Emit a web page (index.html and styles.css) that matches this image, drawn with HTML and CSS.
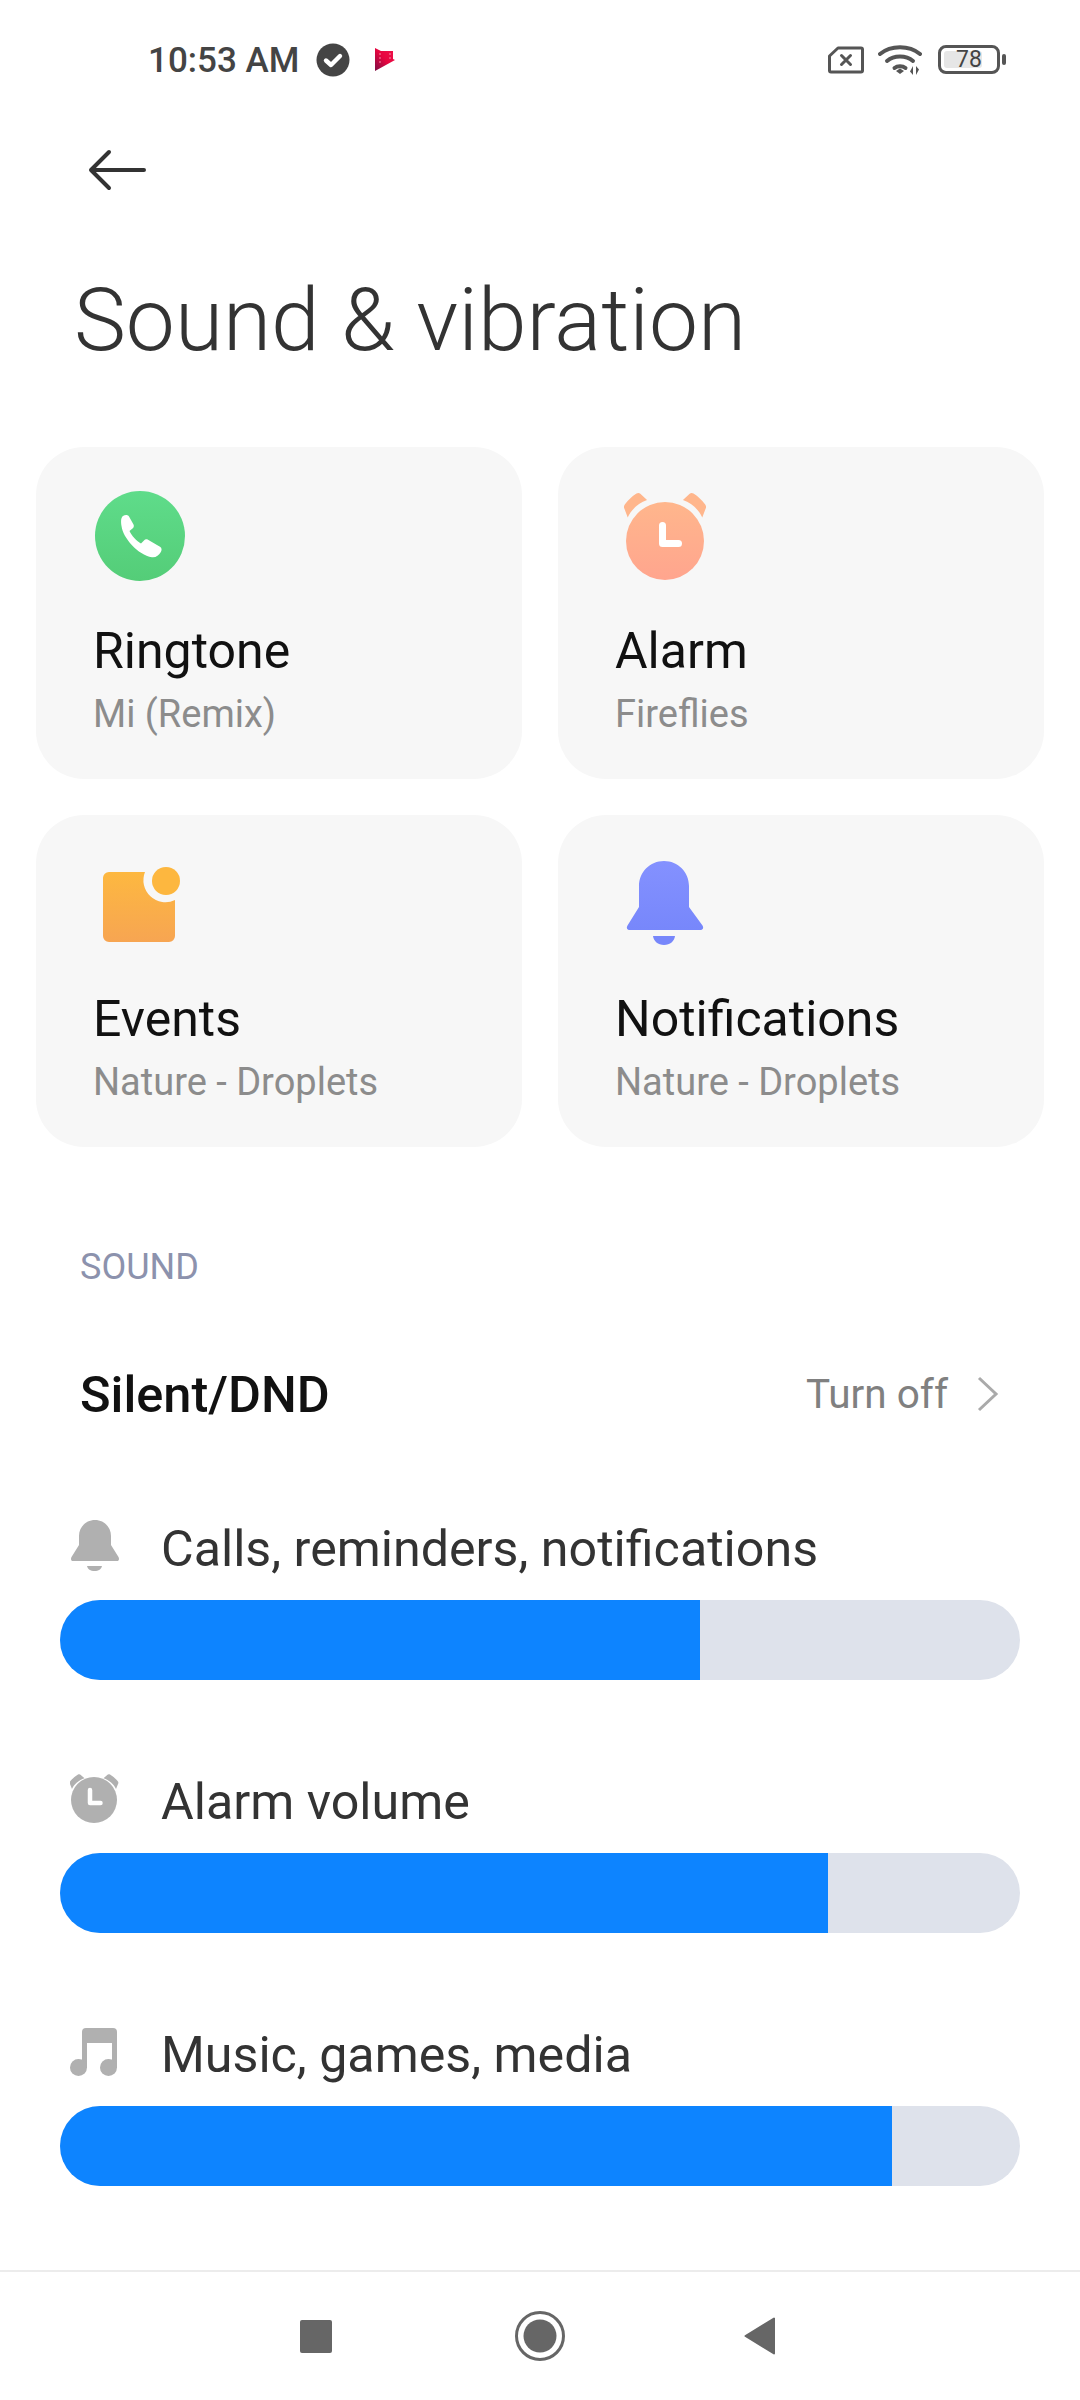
FILE: index.html
```html
<!DOCTYPE html>
<html>
  <head>
    <meta name="viewport" content="width=device-width, initial-scale=1">
    <link rel="stylesheet" href="styles.css">
  </head>
  <body>
    <div class="screen">
      <div class="status">
        <div class="status-left">
          <span class="time">10:53 AM</span>
          <svg class="st-check" viewBox="0 0 34 34"><circle cx="17" cy="17" r="16.5" fill="#444"/><path d="M10 17.5l5 4.5 9-9" fill="none" stroke="#fff" stroke-width="4.4" stroke-linecap="round" stroke-linejoin="round"/></svg>
          <svg class="st-play" viewBox="0 0 20 23"><defs><linearGradient id="pl" x1="0" x2="1" y1="1" y2="0"><stop offset="0" stop-color="#7c0f45"/><stop offset=".5" stop-color="#e6053f"/><stop offset="1" stop-color="#f0134b"/></linearGradient></defs><path d="M0 0l6 3h12v8l2 1-20 11z" fill="url(#pl)"/><path d="M5 5v12M15 5v8" stroke="#f58aa5" stroke-width="1" stroke-dasharray="2 2"/></svg>
        </div>
        <div class="status-right">
          <svg class="st-sim" viewBox="0 0 36 28"><path d="M10 2h23a1.5 1.5 0 0 1 1.5 1.5v21a1.5 1.5 0 0 1-1.5 1.5H3a1.5 1.5 0 0 1-1.500-1.500V10z" fill="none" stroke="#555" stroke-width="3" stroke-linejoin="round"/><path d="M13.5 9.5l9 9m0-9l-9 9" stroke="#555" stroke-width="3" stroke-linecap="round"/></svg>
          <svg class="st-wifi" viewBox="0 0 44 32"><g fill="none" stroke="#555" stroke-width="4" stroke-linecap="round"><path d="M2 10c11-9 29-9 40 0"/><path d="M9 17c7-6 19-6 26 0"/><path d="M16.5 24c3-2.5 8-2.5 11 0"/></g><path d="M18 27l4-2.5 4 2.500-4 3z" fill="#555"/><path d="M35 22v9l-3-3.500zM38 31v-9l3 3.500z" fill="#555"/></svg>
          <div class="battery">
            <div class="battery-body"><span class="battery-fill"></span><span class="battery-num">78</span></div>
            <span class="battery-cap"></span>
          </div>
        </div>
      </div>

      <div class="topbar">
        <svg class="back" viewBox="0 0 60 42"><path d="M57 21H4M22 3L4 21l18 18" fill="none" stroke="#333" stroke-width="4" stroke-linecap="round" stroke-linejoin="round"/></svg>
      </div>

      <h1 class="title">Sound &amp; vibration</h1>

      <div class="cards">
        <div class="card">
          <svg class="card-icon" viewBox="0 0 92 92"><defs><linearGradient id="gr" x1="0" x2="0" y1="0" y2="1"><stop offset="0" stop-color="#5fdc8a"/><stop offset="1" stop-color="#54cd78"/></linearGradient></defs><circle cx="46" cy="45" r="45" fill="url(#gr)"/><path d="M29 25c2-1.500 5-1.500 6 .5l4.500 8c.7 1.500.3 3-1 4l-3 2.500c1.500 4 7.500 10.500 11.500 12.500l3-3c1-1.200 2.500-1.500 4-.7l12 7c2 1.200 2 3.500.7 5.500-2 3-4.700 5.500-8.700 5C44 64 29 47 27.500 35c-.5-3.500-1-8 1.500-10z" fill="#fff"/></svg>
          <div class="card-name">Ringtone</div>
          <div class="card-sub">Mi (Remix)</div>
        </div>
        <div class="card">
          <svg class="card-icon" viewBox="0 0 92 92"><defs><linearGradient id="or" x1="0" x2="0" y1="0" y2="1"><stop offset="0" stop-color="#ffb68c"/><stop offset="1" stop-color="#ffa58e"/></linearGradient></defs><circle cx="49" cy="50" r="39" fill="url(#or)"/><g transform="translate(49 -4) scale(.92 1) translate(-46 0)"><path d="M2 22c-1-1.500-.8-3 .3-4.500C6 13 10 9.500 15 6.500c1.500-.8 3-.8 4.200.3l7.300 6.200C17 16 9 23 5.500 30.500zM90 22c1-1.500.8-3-.3-4.500C86 13 82 9.500 77 6.500c-1.500-.8-3-.8-4.200.3l-7.300 6.200C75 16 83 23 86.500 30.500z" fill="#ffb68c"/></g><path d="M46.5 34.5v18h16" fill="none" stroke="#fff" stroke-width="7" stroke-linecap="round" stroke-linejoin="round"/></svg>
          <div class="card-name">Alarm</div>
          <div class="card-sub">Fireflies</div>
        </div>
        <div class="card">
          <svg class="card-icon" viewBox="0 0 92 92"><defs><linearGradient id="ye" x1="0" x2="0" y1="0" y2="1"><stop offset="0" stop-color="#fdb840"/><stop offset="1" stop-color="#f7a552"/></linearGradient></defs><path d="M15 13h36a22 22 0 0 0 30 28v36a6 6 0 0 1-6 6H15a6 6 0 0 1-6-6V19a6 6 0 0 1 6-6z" fill="url(#ye)"/><circle cx="72" cy="22" r="14" fill="#fdb73f"/></svg>
          <div class="card-name">Events</div>
          <div class="card-sub">Nature - Droplets</div>
        </div>
        <div class="card">
          <svg class="card-icon" viewBox="0 0 92 92"><defs><linearGradient id="bl" x1="0" x2="0" y1="0" y2="1"><stop offset="0" stop-color="#8491ff"/><stop offset="1" stop-color="#7787fb"/></linearGradient></defs><path d="M23 27C23 13 34 2 48 2s25 11 25 25v21l13.500 18.500c1.500 2.500.3 4.500-2.500 4.500H14c-2.800 0-4-2-2.500-4.500L23 48z" fill="url(#bl)"/><path d="M37 77h22c-.5 5-5 9-11 9s-10.500-4-11-9z" fill="#7787fb"/></svg>
          <div class="card-name">Notifications</div>
          <div class="card-sub">Nature - Droplets</div>
        </div>
      </div>

      <div class="section-label">SOUND</div>

      <div class="dnd-row">
        <span class="dnd-name">Silent/DND</span>
        <span class="dnd-action">Turn off
          <svg class="chevron" viewBox="0 0 24 38"><path d="M3 3l17 16L3 35" fill="none" stroke="#aaa" stroke-width="3"/></svg>
        </span>
      </div>

      <div class="volume">
        <div class="vol-head">
          <svg class="vol-icon" viewBox="0 0 50 54"><path d="M9 17C9 8 16 1 25 1s16 7 16 16v9l7.500 12c1 2 .5 4-1.500 4H3c-2 0-2.500-2-1.500-4L9 26z" fill="#b0b0b0"/><path d="M17 47h15c-.5 3-3.500 5-7.500 5s-7-2-7.500-5z" fill="#b0b0b0"/></svg>
          <span class="vol-label">Calls, reminders, notifications</span>
        </div>
        <div class="bar"><div class="bar-fill" style="width: 640px"></div></div>
      </div>

      <div class="volume">
        <div class="vol-head">
          <svg class="vol-icon" viewBox="0 0 50 54"><g transform="translate(-1 -1)"><circle cx="25" cy="29" r="23" fill="#b0b0b0"/><path d="M1 13c-.6-1-.5-2 .2-2.800C3.500 7.500 6 5.500 9 3.500c1-.5 2-.5 2.500.2l4 3.500C10 9 5 13 3 18zM49 13c.6-1 .5-2-.2-2.800C46.500 7.500 44 5.500 41 3.500c-1-.5-2-.5-2.500.2l-4 3.500C40 9 45 13 47 18z" fill="#b0b0b0"/><path d="M21 19v13h10.500" fill="none" stroke="#fff" stroke-width="4.500" stroke-linecap="round" stroke-linejoin="round"/></g></svg>
          <span class="vol-label">Alarm volume</span>
        </div>
        <div class="bar"><div class="bar-fill" style="width: 768px"></div></div>
      </div>

      <div class="volume">
        <div class="vol-head">
          <svg class="vol-icon" viewBox="0 0 50 54"><path d="M12 43V7a4 4 0 0 1 4-4h27a4 4 0 0 1 4 4v36h-5V18H17v25z" fill="#b0b0b0"/><circle cx="8.500" cy="42.500" r="8.500" fill="#b0b0b0"/><circle cx="38.500" cy="42.500" r="8.500" fill="#b0b0b0"/></svg>
          <span class="vol-label">Music, games, media</span>
        </div>
        <div class="bar"><div class="bar-fill" style="width: 832px"></div></div>
      </div>

      <div class="navbar">
        <span class="nav-square"></span>
        <svg class="nav-home" viewBox="0 0 50 50"><circle cx="25" cy="25" r="23.5" fill="none" stroke="#666" stroke-width="3"/><circle cx="25" cy="25" r="16.500" fill="#666"/></svg>
        <svg class="nav-back" viewBox="0 0 32 38"><path d="M30 1.500v35L1.500 19z" fill="#666" stroke="#666" stroke-width="2" stroke-linejoin="round"/></svg>
      </div>
    </div>
  </body>
</html>
```

FILE: styles.css
```css
html, body { margin: 0; padding: 0; background: #fff; }
.screen {
  width: 1080px;
  height: 2400px;
  overflow: hidden;
  font-family: Roboto, "Liberation Sans", sans-serif;
  display: flex;
  flex-direction: column;
}

/* status bar */
.status {
  height: 60px;
  margin-top: 30px;
  padding: 0 74px 0 148px;
  display: flex;
  align-items: center;
  justify-content: space-between;
}
.status-left, .status-right { display: flex; align-items: center; }
.time { font-size: 35px; font-weight: 500; color: #444; width: 168px; padding-top: 2px; }
.st-check { width: 34px; height: 34px; }
.st-play { width: 20px; height: 23px; margin-left: 25px; }
.st-sim { width: 36px; height: 28px; }
.st-wifi { width: 44px; height: 32px; margin-left: 14px; }
.battery { display: flex; align-items: center; margin-left: 16px; }
.battery-body {
  position: relative;
  box-sizing: border-box;
  width: 62px;
  height: 29px;
  border: 3.5px solid #555;
  border-radius: 8px;
  display: flex;
  align-items: center;
  justify-content: center;
}
.battery-fill {
  position: absolute;
  left: 3px;
  top: 3px;
  bottom: 3px;
  width: 38px;
  background: #e6e6e6;
  border-radius: 3px;
}
.battery-num { position: relative; font-size: 23px; color: #444; }
.battery-cap { width: 4px; height: 11px; margin-left: 2px; background: #555; border-radius: 2px; }

/* header */
.topbar { height: 84px; margin-top: 38px; padding-left: 87px; display: flex; align-items: center; }
.back { width: 60px; height: 42px; }
.title {
  margin: 59px 0 0 74px;
  font-size: 87.5px;
  line-height: 100px;
  font-weight: 300;
  color: #333;
}

/* cards */
.cards {
  margin: 77px 36px 0;
  display: grid;
  grid-template-columns: 486px 486px;
  grid-auto-rows: 332px;
  gap: 36px;
}
.card {
  background: #f7f7f7;
  border-radius: 48px;
  padding: 44px 0 0 57px;
}
.card-icon { display: block; width: 92px; height: 92px; margin-left: 1px; }
.card-name { margin-top: 38px; font-size: 50px; line-height: 60px; color: #111; }
.card-sub { margin-top: 9px; font-size: 38px; line-height: 48px; color: #8c8c8c; }

.section-label { margin: 98px 0 0 80px; font-size: 36px; line-height: 44px; color: #8c92ad; }

.dnd-row {
  margin: 75px 80px 0;
  display: flex;
  align-items: center;
  justify-content: space-between;
  height: 60px;
}
.dnd-name { font-size: 50.5px; font-weight: 500; color: #111; }
.dnd-action { display: flex; align-items: center; font-size: 40.5px; color: #808080; }
.chevron { width: 24px; height: 38px; margin-left: 28px; }

/* volume sliders */
.volume { margin: 0 60px; }
.dnd-row + .volume { margin-top: 87px; }
.vol-head { height: 74px; display: flex; align-items: center; }
.vol-icon { width: 50px; height: 54px; margin: -4px 0 0 10px; }
.vol-label { margin-left: 41px; font-size: 50.2px; color: #333; }
.bar { height: 80px; background: #dee2eb; border-radius: 40px; overflow: hidden; margin-top: 15px; margin-bottom: 84px; }
.bar-fill { height: 100%; background: #0d84ff; }

/* nav bar */
.navbar {
  margin-top: auto;
  flex: none;
  height: 130px;
  box-sizing: border-box;
  border-top: 2px solid #ececec;
  padding-left: 300px;
  display: flex;
  align-items: center;
}
.nav-square { width: 32px; height: 33px; background: #666; border-radius: 2px; }
.nav-home { width: 50px; height: 50px; margin-left: 183px; }
.nav-back { width: 32px; height: 38px; margin-left: 179px; }
```
